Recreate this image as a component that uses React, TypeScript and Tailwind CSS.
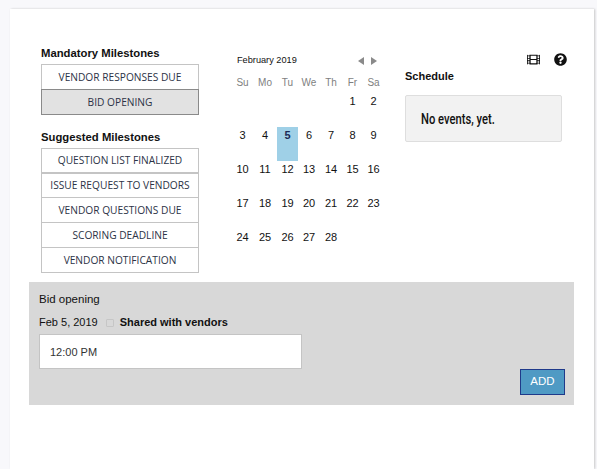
import { FaFilm, FaQuestionCircle } from "react-icons/fa";

const mandatory = ["VENDOR RESPONSES DUE", "BID OPENING"];
const suggested = [
  "QUESTION LIST FINALIZED",
  "ISSUE REQUEST TO VENDORS",
  "VENDOR QUESTIONS DUE",
  "SCORING DEADLINE",
  "VENDOR NOTIFICATION",
];
const weekDays = ["Su", "Mo", "Tu", "We", "Th", "Fr", "Sa"];
// February 2019 starts on a Friday
const days = [0, 0, 0, 0, 0, 1, 2, 3, 4, 5, 6, 7, 8, 9, 10, 11, 12, 13, 14, 15, 16, 17, 18, 19, 20, 21, 22, 23, 24, 25, 26, 27, 28];

function MilestoneButton({ label, active, separate }: { label: string; active?: boolean; separate?: boolean }) {
  return (
    <button
      className={`w-full border text-[10.2px] leading-none text-[#2c3346] ${
        separate ? "h-[25px]" : "h-[26px] -mt-px first:mt-0"
      } ${active ? "relative bg-[#e2e2e2] border-[#8a8a8a]" : "bg-white border-[#c4c4c4]"}`}
      style={{ fontFamily: '"Open Sans", sans-serif' }}
    >
      {label}
    </button>
  );
}

export default function App() {
  return (
    <div className="h-[469px] overflow-hidden bg-[#f8f8fb] pt-[9px] pl-[10px] pr-[3px] font-['Liberation_Sans',sans-serif] text-black">
      <div className="h-[460px] bg-white shadow-[1px_0_2px_#c8c8c8]">
        <div className="flex h-[273px]">
          {/* Milestones */}
          <div className="ml-[31px] mt-[38px] w-[158px]">
            <h3 className="h-[17px] text-[11.3px] leading-[13px] font-bold text-[#111]">Mandatory Milestones</h3>
            <div className="flex flex-col">
              {mandatory.map((m) => (
                <MilestoneButton key={m} label={m} active={m === "BID OPENING"} />
              ))}
            </div>
            <h3 className="mt-[16px] h-[17px] text-[11.3px] leading-[13px] font-bold text-[#111]">Suggested Milestones</h3>
            <div className="flex flex-col">
              {suggested.map((m, i) => (
                <MilestoneButton key={m} label={m} separate={i < 2} />
              ))}
            </div>
          </div>

          {/* Calendar */}
          <div className="ml-[33px] mt-[45px] w-[152px]">
            <div className="flex h-[13px] items-center justify-between pl-[5px] pr-[7px]">
              <span className="text-[9.2px] leading-none text-[#111]">February 2019</span>
              <span className="flex gap-[7px]">
                <span className="h-0 w-0 border-y-[4px] border-r-[6px] border-y-transparent border-r-[#8a8a8a]" />
                <span className="h-0 w-0 border-y-[4px] border-l-[6px] border-y-transparent border-l-[#8a8a8a]" />
              </span>
            </div>
            <div className="mt-[9px] grid grid-cols-[21px_24px_21px_22px_22px_21px_21px]">
              {weekDays.map((d) => (
                <div key={d} className="h-[13px] text-center text-[10px] leading-[13px] text-[#7f7f7f]">
                  {d}
                </div>
              ))}
            </div>
            <div className="mt-[4px] grid grid-cols-[21px_24px_21px_22px_22px_21px_21px]">
              {days.map((d, i) => (
                <div
                  key={i}
                  className={`h-[34px] pt-[2px] text-center text-[11px] leading-[13px] ${
                    d === 5 ? "bg-[#9fd0e7] font-bold text-[#1b2a55]" : "text-[#111]"
                  }`}
                >
                  {d > 0 ? d : ""}
                </div>
              ))}
            </div>
          </div>

          {/* Schedule */}
          <div className="ml-[21px] mt-[44px] w-[162px]">
            <div className="flex h-[13px] items-center justify-end gap-[14px]">
              <FaFilm className="h-[13px] w-[13px] text-[#111]" />
              <FaQuestionCircle className="h-[13px] w-[13px] text-[#111]" />
            </div>
            <h3 className="mt-[3px] h-[14px] text-[11px] leading-[14px] font-bold text-[#111]">Schedule</h3>
            <div className="mt-[12px] flex h-[47px] w-[157px] items-center rounded-[2px] border border-[#dedede] bg-[#f2f2f2] pl-[15px] pt-[2px]">
              <span className="origin-left scale-x-[0.8] whitespace-nowrap text-[14px] font-medium text-[#111]" style={{ fontFamily: "Roboto, sans-serif" }}>
                No events, yet.
              </span>
            </div>
          </div>
        </div>

        {/* Event form */}
        <div className="ml-[19px] h-[123px] w-[545px] bg-[#d8d8d8] px-[10px] pt-[11px]">
          <div className="text-[11.5px] leading-[13px] text-[#111]">Bid opening</div>
          <div className="mt-[10px] flex h-[13px] items-center text-[11px] leading-[13px] text-[#111]">
            <span>Feb 5, 2019</span>
            <span className="ml-[8px] h-[8px] w-[8px] rounded-[1px] border border-[#c6c6c6] bg-[#d8d8d8]" />
            <span className="ml-[6px] font-bold">Shared with vendors</span>
          </div>
          <div className="mt-[5px] flex h-[35px] w-[263px] items-center border border-[#c4c4c4] bg-white pl-[10px] pt-[2px] text-[11px] text-[#333]">
            12:00 PM
          </div>
          <div className="-mr-px flex justify-end">
            <button className="h-[26px] w-[45px] border border-[#1f3a8a] bg-[#4f9ac4] text-[11.5px] text-white">ADD</button>
          </div>
        </div>
      </div>
    </div>
  );
}
